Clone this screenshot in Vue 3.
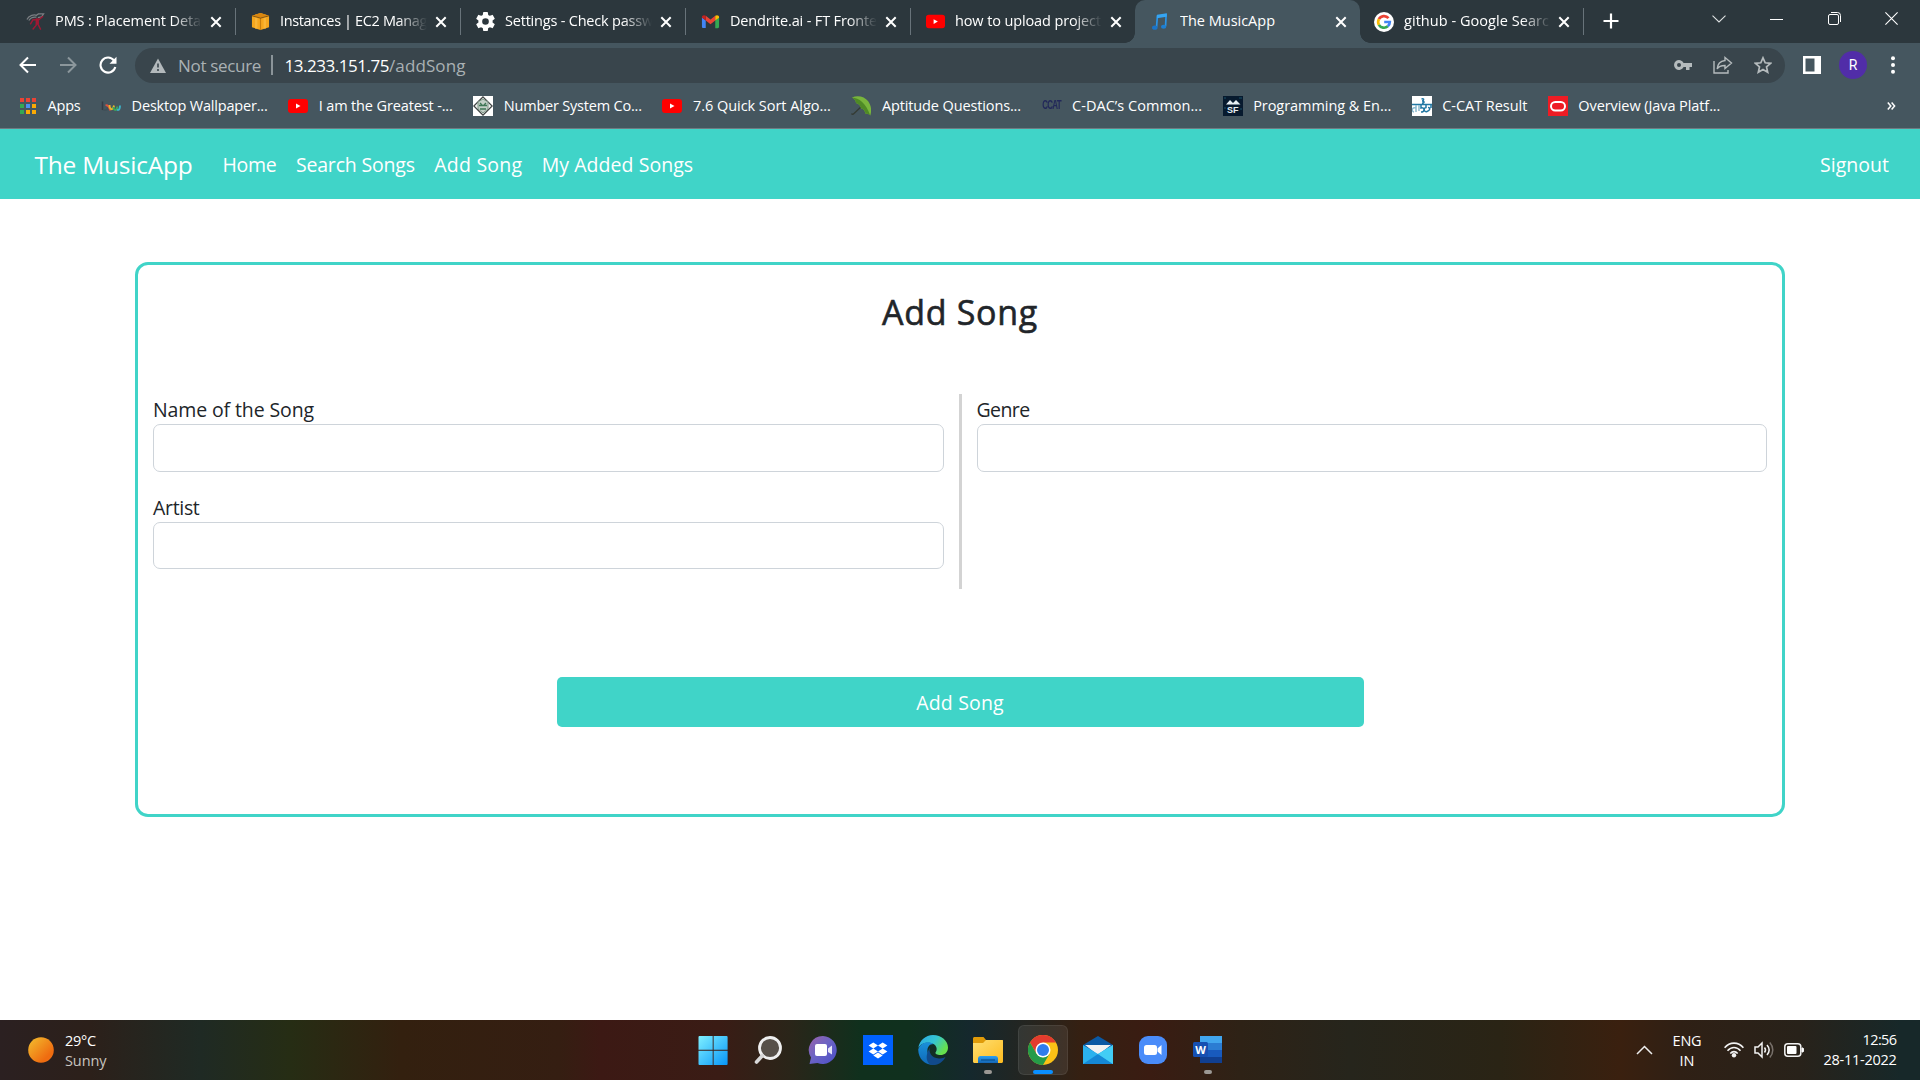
<script setup>
// Sets the tracking of a label so that it fills the given width.
const vFit = {
  mounted(el, { value }) {
    el.style.letterSpacing = '0px'
    const range = document.createRange()
    range.selectNodeContents(el)
    const natural = range.getBoundingClientRect().width
    el.style.letterSpacing = (value - natural) / el.textContent.length + 'px'
    el.style.width = value + 'px'
  },
}

const tabs = [
  { icon: 'pms', title: 'PMS : Placement Deta', w: 146 },
  { icon: 'aws', title: 'Instances | EC2 Manag', w: 147 },
  { icon: 'gear', title: 'Settings - Check passw', w: 148 },
  { icon: 'gmail', title: 'Dendrite.ai - FT Fronte', w: 147 },
  { icon: 'yt', title: 'how to upload project', w: 146 },
  { icon: 'music', title: 'The MusicApp', w: 95, active: true },
  { icon: 'google', title: 'github - Google Searc', w: 145 },
]

const bookmarks = [
  { icon: 'apps', title: 'Apps', w: 33 },
  { icon: 'bw', title: 'Desktop Wallpaper...', w: 136 },
  { icon: 'yt', title: 'I am the Greatest -...', w: 134 },
  { icon: 'geeks', title: 'Number System Co...', w: 138 },
  { icon: 'yt', title: '7.6 Quick Sort Algo...', w: 138 },
  { icon: 'umbrella', title: 'Aptitude Questions...', w: 139 },
  { badge: 'CCAT', title: 'C-DAC’s Common...', w: 130 },
  { icon: 'sf', badge: 'SF', title: 'Programming & En...', w: 138 },
  { icon: 'cdac', title: 'C-CAT Result', w: 85 },
  { icon: 'oracle', title: 'Overview (Java Platf...', w: 142 },
]

const links = [
  { title: 'Home', w: 54 },
  { title: 'Search Songs', w: 119 },
  { title: 'Add Song', w: 88 },
  { title: 'My Added Songs', w: 151.5 },
]
</script>

<template>
  <div class="screen">
    <svg class="defs" width="0" height="0" aria-hidden="true">
      <defs>
        <linearGradient id="gSun" x1="0" y1="0" x2="1" y2="1"><stop offset="0" stop-color="#f3c02f" /><stop offset=".75" stop-color="#ef6c10" /></linearGradient>
        <linearGradient id="gWin" x1="0" y1="0" x2="1" y2="1"><stop offset="0" stop-color="#7ff0ff" /><stop offset="1" stop-color="#0795f8" /></linearGradient>
        <linearGradient id="gChat" x1="0" y1="0" x2="1" y2="1"><stop offset="0" stop-color="#9b62a8" /><stop offset=".45" stop-color="#6c63c4" /><stop offset="1" stop-color="#4a4fc8" /></linearGradient>
        <linearGradient id="gEdge" x1="0" y1="0" x2="1" y2=".5"><stop offset="0" stop-color="#2aa6e8" /><stop offset=".55" stop-color="#35c5d2" /><stop offset="1" stop-color="#66e04d" /></linearGradient>
        <linearGradient id="gEdge2" x1="0" y1="0" x2="0" y2="1"><stop offset="0" stop-color="#1a90da" /><stop offset="1" stop-color="#0f68b8" /></linearGradient>
        <linearGradient id="gFold" x1="0" y1="0" x2="1" y2="1"><stop offset="0" stop-color="#ffdf72" /><stop offset="1" stop-color="#fdbb1f" /></linearGradient>
        <linearGradient id="gNote" x1="0" y1="0" x2="0" y2="1"><stop offset="0" stop-color="#29a0f4" /><stop offset="1" stop-color="#1465b4" /></linearGradient>
      </defs>
      <symbol id="pms" viewBox="0 0 20 20">
        <path d="M1 8C3 3 9 2.500 11 3.500L13 2h5.500l-2 3-4 1M3 9C5 5.500 8 5 11 5.500" fill="none" stroke="#7b7f83" stroke-width="1.300" />
        <path d="M18 4.500 12.500 9 12.700 13l2.800 5.500M12.500 8.500l-5-.500-3 5M11.500 13 7 18.500" fill="none" stroke="#a01833" stroke-width="1.500" />
        <path d="M10.200 6.500h3.300v6L10 14z" fill="#a01833" />
      </symbol>
      <symbol id="aws" viewBox="0 0 20 20">
        <path d="m1 4 9-3 9 3v12l-9 3-9-3z" fill="#f5a61d" /><path d="m1 4 9-3 9 3-9 2.500z" fill="#d9860f" /><path d="M5.500 5.800v11.500M14.500 5.800v11.500" stroke="#f9b537" stroke-width="2.500" /><path d="M10 6.500V19" stroke="#c67d0e" stroke-width="1.200" /><path d="M1 4l9 2.500L19 4" fill="none" stroke="#503512" stroke-width=".7" />
      </symbol>
      <symbol id="gear" viewBox="2 2 20 20">
        <path fill="#fff" d="M19.430 12.980c.04-.32.070-.64.070-.98s-.03-.66-.07-.98l2.110-1.650a.5.5 0 0 0 .12-.64l-2-3.460a.5.5 0 0 0-.61-.22l-2.490 1a7.300 7.300 0 0 0-1.690-.98l-.38-2.650A.49.49 0 0 0 14 2h-4a.49.49 0 0 0-.49.420l-.38 2.650c-.61.250-1.170.590-1.690.980l-2.490-1a.49.49 0 0 0-.61.220l-2 3.460a.49.49 0 0 0 .12.640l2.110 1.650a7.900 7.900 0 0 0 0 1.960l-2.110 1.650a.5.5 0 0 0-.12.640l2 3.460c.12.220.39.300.61.220l2.490-1c.52.400 1.080.730 1.690.980l.38 2.650c.03.240.24.420.49.420h4c.25 0 .46-.18.490-.42l.38-2.650c.61-.25 1.170-.59 1.690-.98l2.490 1c.23.090.49 0 .61-.22l2-3.460a.5.5 0 0 0-.12-.64zM12 15.500a3.500 3.500 0 1 1 0-7 3.500 3.500 0 0 1 0 7z" />
      </symbol>
      <symbol id="gmail" viewBox="0 0 20 20">
        <path fill="#4285f4" d="M1 5.500v10c0 .8.600 1.400 1.400 1.400H5V9z" /><path fill="#34a853" d="M15 17h2.600c.8 0 1.400-.6 1.400-1.400v-10L15 9z" /><path fill="#ea4335" d="M5 9V4l5 3.800L15 4v5l-5 3.800z" /><path fill="#c5221f" d="M1 5.200V6l4 3V4C3.300 2.700 1 3.600 1 5.200z" /><path fill="#fbbc04" d="M15 4v5l4-3v-.8C19 3.500 16.700 2.700 15 4z" />
      </symbol>
      <symbol id="yt" viewBox="0 0 20 20"><rect y="3" width="20" height="14" rx="3" fill="#f00" /><path d="M8 7.500v5l4.500-2.500z" fill="#fff" /></symbol>
      <symbol id="music" viewBox="0 0 20 20">
        <path d="M6.800 3.500 5.800 16M16 2l-.7 13" fill="none" stroke="#2a93e6" stroke-width="1.800" /><path d="M6.300 3 16.700 1.400 16.500 5 6.200 6.500z" fill="#35a5f3" /><ellipse cx="4" cy="16.500" rx="2.900" ry="2.200" fill="#1b74c8" /><ellipse cx="13.300" cy="15.500" rx="2.800" ry="2.200" fill="#1e7fd2" />
      </symbol>
      <symbol id="google" viewBox="0 0 20 20">
        <circle cx="10" cy="10" r="10" fill="#fff" />
        <g fill="none" stroke-width="2.700"><path d="M14.500 6.200A5.800 5.800 0 0 0 4.900 7.200" stroke="#ea4335" /><path d="M4.900 7.200a5.800 5.800 0 0 0 0 5.600" stroke="#fbbc05" /><path d="M4.900 12.800a5.800 5.800 0 0 0 8.900 1.500" stroke="#34a853" /><path d="M13.800 14.300A5.800 5.800 0 0 0 15.800 10H10.200" stroke="#4285f4" /></g>
      </symbol>
      <symbol id="apps" viewBox="0 0 20 20">
        <path fill="#ea4335" d="M2 2h4v4H2zM8 2h4v4H8zM14 2h4v4h-4z" /><path fill="#34a853" d="M2 8h4v4H2zM2 14h4v4H2z" /><path fill="#4a90f4" d="M8 8h4v4H8z" /><path fill="#fbaa05" d="M14 8h4v4h-4zM14 14h4v4h-4zM8 14h4v4H8z" />
      </symbol>
      <symbol id="bw" viewBox="0 0 20 20">
        <g fill="none" stroke-width="1.900"><path d="M1.500 5.500V14" stroke="#343b45" stroke-width="1.500" /><path d="M2 13.500c3 1.500 5 0 5-2.500" stroke="#3f4f58" /><path d="M4.500 9.500c3-1.500 4 3.500 5 5" stroke="#dd5140" /><path d="M8.500 9c0 5 3.500 6 4.500.500" stroke="#e8b52c" /><path d="M12.300 11c.5 4 3.500 4 4-.5" stroke="#3ba85a" /><path d="M16 13.500c2 1.500 3-1 3-4" stroke="#3bb4c9" /></g>
      </symbol>
      <symbol id="geeks" viewBox="0 0 20 20">
        <path fill="#fff" d="M0 0h20v20H0z" /><path d="m10 .8 9.200 9.200-9.200 9.200L.8 10z" fill="#eef1ee" stroke="#3d4140" stroke-width="1.200" /><path d="m5 6 5-3 5 3v7l-5 4-5-4z" fill="#c3cfc7" stroke="#7a9484" stroke-width="1" /><path d="M6 9.500h8M7 13h6M7 7l2 2M13 7l-2 2" stroke="#3f7756" stroke-width="1.300" />
      </symbol>
      <symbol id="umbrella" viewBox="0 0 20 20">
        <path d="M12 9 3 17.500c-1 1-2 1-2.500 0" fill="none" stroke="#343b33" stroke-width="1.300" /><path d="M1 1.500C7-1.500 14 1 17 5c3 4 4 9 2.300 14.500C18 17.800 16 17.500 14.800 18 14 15 12.500 13 10 12.200 9.500 9.500 7.500 7.500 5 7 5 5 3.500 3 1 1.500z" fill="#78b53c" /><path d="M1 1.500C8 2 15 7 19.300 19.500 18 17.800 16 17.500 14.800 18 14 15 12.500 13 10 12.200 9.500 9.500 7.500 7.500 5 7 5 5 3.500 3 1 1.500z" fill="#4f8a26" />
      </symbol>
      <symbol id="sf" viewBox="0 0 20 20"><path fill="#071a2e" d="M0 0h20v20H0z" /><path d="M3 8.500 7 4l3 3 3-3 4.500 4.500z" fill="#e8f0f4" /><path d="M1 2h2M16 2h3M1 12h2M17 13h2" stroke="#185069" /></symbol>
      <symbol id="cdac" viewBox="0 0 20 20">
        <path fill="#fff" d="M0 0h20v20H0z" /><g fill="none" stroke="#2278a4" stroke-width="1.500"><path d="M9.500 3c3.500-1 2 2 .5 2 3 0 2.500 2.500 0 2M0 8.500h20M9 9v3c4-1 4 4 0 4M14 9v2.500c-3 .5-2 5 1 4 3-1 4-4 1-4M19 9v3" /><path d="M4 9v7M4 12c-4-1-5 3-2 4M7 9v6" stroke="#8bbbd0" /></g>
      </symbol>
      <symbol id="oracle" viewBox="0 0 20 20"><path fill="#ee1c24" d="M0 0h20v20H0z" /><rect x="3" y="6" width="14" height="8.500" rx="4.250" fill="none" stroke="#fff" stroke-width="2" /></symbol>
      <symbol id="cross" viewBox="0 0 12 12"><path d="m1.300 1.300 9.400 9.400M10.700 1.300 1.300 10.700" stroke="#fff" stroke-width="2" /></symbol>
    </svg>

    <header class="browser">
      <div class="tabstrip">
        <div v-for="t in tabs" :key="t.title" class="tab" :class="{ active: t.active }">
          <svg class="favicon"><use :href="'#' + t.icon" /></svg>
          <span class="tab-title" :class="{ faded: !t.active }"><span v-fit="t.w" class="fit">{{ t.title }}</span></span>
          <svg class="tab-close"><use href="#cross" /></svg>
        </div>
        <svg class="new-tab" viewBox="0 0 16 16"><path d="M8 .5v15M.5 8h15" stroke="#fff" stroke-width="2.200" /></svg>
        <div class="window-controls">
          <svg width="14" height="8" viewBox="0 0 14 8"><path d="m.5.700 6.500 6.300L13.500.7" fill="none" stroke="#dfe2e3" stroke-width="1.100" /></svg>
          <svg width="13" height="14" viewBox="0 0 13 14"><path d="M0 7.500h13" stroke="#fff" /></svg>
          <svg width="13" height="13" viewBox="0 0 13 13"><g fill="none" stroke="#fff"><rect x=".5" y="2.500" width="10" height="10" rx="1.500" /><path d="M3 .5h6.500a3 3 0 0 1 3 3V10" /></g></svg>
          <svg width="13" height="13" viewBox="0 0 13 13"><path d="m.4.400 12.200 12.200M12.600.4.400 12.600" stroke="#fff" stroke-width="1.100" /></svg>
        </div>
      </div>

      <div class="toolbar">
        <svg class="nav-ico" viewBox="0 0 18 18"><path d="M17 9H2M9 1.500 1.500 9 9 16.500" fill="none" stroke="#fff" stroke-width="2" /></svg>
        <svg class="nav-ico" viewBox="0 0 18 18"><path d="M1 9h15M9 1.500 16.500 9 9 16.500" fill="none" stroke="#8c979c" stroke-width="2" /></svg>
        <svg class="nav-ico" viewBox="0 0 18 18"><path d="M15 4.500A7.500 7.500 0 1 0 16.300 11" fill="none" stroke="#fff" stroke-width="2.100" /><path d="M17.500.8v7h-7z" fill="#fff" /></svg>
        <div class="omnibox">
          <svg class="warn" viewBox="0 0 16 15"><path d="M8 .5 16 15H0z" fill="#b3b9bc" /><path d="M8 5.500v4M8 11v2" stroke="#39454c" stroke-width="1.600" /></svg>
          <span v-fit="83" class="fit secure">Not secure</span>
          <i class="bar"></i>
          <span v-fit="104.500" class="fit host">13.233.151.75</span><span v-fit="76.500" class="fit path">/addSong</span>
          <div class="omni-icons">
            <svg width="18" height="12" viewBox="0 0 18 12"><path d="M9.600 4A5 5 0 1 0 9.600 8H12v3h3.500V8H18V4zM5 8a2 2 0 1 1 0-4 2 2 0 0 1 0 4z" fill="#b5bbbd" /></svg>
            <svg width="20" height="18" viewBox="0 0 20 18"><g fill="none" stroke="#b5bbbd" stroke-width="1.400"><path d="M1 5v12h14v-3" /><path d="M12 1.500 18.500 7 12 12.500V9.500c-4 0-6.500 1-7.800 3.500.3-4.500 3-8 7.800-8.500z" /></g></svg>
            <svg width="18" height="18" viewBox="0 0 18 18"><path d="m9 1.800 2.200 5 5.400.5-4.100 3.600 1.200 5.300L9 13.400l-4.700 2.800 1.200-5.300-4.100-3.600 5.400-.5z" fill="none" stroke="#b5bbbd" stroke-width="1.700" /></svg>
          </div>
        </div>
        <svg class="panel" viewBox="0 0 18 18"><path fill="#fff" fill-rule="evenodd" d="M0 0h18v18H0zM2.500 2.500v13h9v-13z" /></svg>
        <span class="avatar">R</span>
        <svg class="dots" viewBox="0 0 4 18"><circle cx="2" cy="2.200" r="2" fill="#fff" /><circle cx="2" cy="9" r="2" fill="#fff" /><circle cx="2" cy="15.800" r="2" fill="#fff" /></svg>
      </div>

      <div class="bookmarks">
        <div v-for="b in bookmarks" :key="b.title" class="bookmark">
          <span class="bm-ico">
            <svg v-if="b.icon" width="20" height="20"><use :href="'#' + b.icon" /></svg>
            <span v-if="b.badge" class="badge" :class="b.badge.toLowerCase()">{{ b.badge }}</span>
          </span>
          <span v-fit="b.w" class="fit">{{ b.title }}</span>
        </div>
        <svg class="more" viewBox="0 0 9 8"><path d="m.8.600 3 3.400-3 3.400M4.600.6l3 3.400-3 3.400" fill="none" stroke="#fff" stroke-width="1.500" /></svg>
      </div>
    </header>

    <nav class="navbar">
      <a v-fit="158" class="fit brand">The MusicApp</a>
      <a v-for="l in links" :key="l.title" v-fit="l.w" class="fit link">{{ l.title }}</a>
      <a v-fit="69" class="fit signout">Signout</a>
    </nav>

    <main class="page">
      <section class="card">
        <h2 class="heading"><span v-fit="156" class="fit">Add Song</span></h2>
        <div class="columns">
          <div class="col">
            <label class="field"><span v-fit="161" class="fit">Name of the Song</span><input type="text" /></label>
            <label class="field second"><span v-fit="46.500" class="fit">Artist</span><input type="text" /></label>
          </div>
          <i class="divider"></i>
          <div class="col">
            <label class="field"><span v-fit="53" class="fit">Genre</span><input type="text" /></label>
          </div>
        </div>
        <button class="submit"><span v-fit="87.500" class="fit">Add Song</span></button>
      </section>
    </main>

    <footer class="taskbar">
      <div class="weather">
        <svg width="26" height="26" viewBox="0 0 26 26"><circle cx="13" cy="13" r="12.800" fill="url(#gSun)" /></svg>
        <div class="weather-text"><span v-fit="31" class="fit">29°C</span><span v-fit="41.500" class="fit dim">Sunny</span></div>
      </div>

      <div class="apps">
        <div class="slot"><svg width="30" height="30" viewBox="0 0 30 30"><path fill="url(#gWin)" d="M1.500 1h13.200v13.700H.5V2a1 1 0 0 1 1-1zM15.600 1h13a1 1 0 0 1 1 1v12.700h-14zM.5 15.700h14.200V30H1.500a1 1 0 0 1-1-1zM15.600 15.700h14V29a1 1 0 0 1-1 1h-13z" /></svg></div>
        <div class="slot"><svg width="30" height="30" viewBox="0 0 30 30"><circle cx="17" cy="13" r="10.500" fill="#575049" stroke="#efefef" stroke-width="2.800" /><path d="M9.500 20.500 3.500 27" stroke="#d8d8d8" stroke-width="3.600" stroke-linecap="round" /></svg></div>
        <div class="slot"><svg width="30" height="30" viewBox="0 0 30 30"><path d="M15 1a14 14 0 1 1-5.500 27L1.500 29 3 22.500A14 14 0 0 1 15 1z" fill="url(#gChat)" /><rect x="7" y="9" width="12" height="12" rx="2" fill="#fff" /><path d="M20 13.500 24 10.500v9L20 17z" fill="#e6e6f8" /></svg></div>
        <div class="slot"><svg width="30" height="30" viewBox="0 0 30 30"><path fill="#0061fe" d="M0 0h30v30H0z" /><path fill="#fff" d="m10.300 7.400 4.700 3-4.700 3-4.700-3zM19.700 7.400l4.700 3-4.700 3-4.700-3zM10.300 13.400l4.700 3-4.700 3-4.700-3zM19.700 13.400l4.700 3-4.700 3-4.700-3zM15 17.400l4.700 3-4.700 3-4.700-3z" /></svg></div>
        <div class="slot"><svg width="30" height="30" viewBox="0 0 30 30"><path d="M.3 13C1.500 5.500 7.500 0 15 0c8.500 0 15 6 15 12.500 0 5-3.500 7.500-7.500 7.500-3.500 0-5.500-1.200-5-2.500 2-2.500 1.500-6.500-2-8.500C10.500 6.500 3 7.500.3 13z" fill="url(#gEdge)" /><path d="M.2 14.500C2.500 7 11 5.500 15.500 9c-4.500 0-6.500 3.500-6 8 .6 5.500 5 9.500 9.500 12-8.500 3-18.500-2.500-18.800-14.500z" fill="url(#gEdge2)" /><path d="M12 12.500C10.500 17 13 23 21 23.500c3 .2 5-1 6.500-1.500-2.500 4.500-6.500 8-12.500 8-6 0-9-8.500-3-17.500z" fill="#114a8b" /></svg></div>
        <div class="slot"><svg width="30" height="30" viewBox="0 0 30 30"><path d="M0 3.500C0 2.500.8 2 1.500 2h9L13 5h16c.6 0 1 .5 1 1v4H0z" fill="#e09b09" /><path d="M0 8h10l3-3h16c.6 0 1 .5 1 1v20.500c0 .8-.7 1.500-1.500 1.500h-27C.7 28 0 27.300 0 26.500z" fill="url(#gFold)" /><path d="M5 28v-5a2.500 2.500 0 0 1 2.500-2h15a2.500 2.500 0 0 1 2.500 2v5z" fill="url(#gNote)" /><path d="M8 25h14" stroke="#0a508f" stroke-width="1.200" /></svg><i class="run"></i></div>
        <div class="slot current"><svg width="30" height="30" viewBox="0 0 30 30"><circle cx="15" cy="15" r="15" fill="#fbc116" /><path d="M2 7.500A15 15 0 0 1 28 7.500H15L8.500 18.800z" fill="#e33b2e" /><path d="M2 7.500 8.500 18.800l6.500 3.700 6.500-3.700L15 30A15 15 0 0 1 2 7.500z" fill="#259b48" /><circle cx="15" cy="15" r="7.500" fill="#fff" /><circle cx="15" cy="15" r="6" fill="#2f7ced" /></svg><i class="run wide"></i></div>
        <div class="slot"><svg width="30" height="30" viewBox="0 0 30 30"><path d="M0 10 15 1l15 9-5 8H5z" fill="#0a59a4" /><path d="M2 10h26L15 20z" fill="#f2f2f2" /><path d="M0 10v18.900h30V10L15 19z" fill="#2bb2ee" /><path d="m0 28.900 30 0L15 19z" fill="#1588d6" /><path d="m30 10-15 9 15 9.900z" fill="#42cdf5" /></svg></div>
        <div class="slot"><svg width="30" height="30" viewBox="0 0 30 30"><rect x="1" y="1" width="28" height="28" rx="9" fill="#4a8cf9" /><rect x="6" y="10" width="13" height="10" rx="2.500" fill="#fff" /><path d="m19.500 13.500 4-3.500v10l-4-3.500z" fill="#fff" /></svg></div>
        <div class="slot"><svg width="30" height="30" viewBox="0 0 30 30"><path fill="#41a5ee" d="M7 1h22v7H7z" /><path fill="#2b7cd3" d="M7 8h22v7H7z" /><path fill="#185abd" d="M7 15h22v7H7z" /><path fill="#103f91" d="M7 22h22v6H7z" /><rect x="0" y="7" width="15" height="15" rx="1.500" fill="#1650b2" /><text x="7.500" y="18.500" text-anchor="middle" font-family="Open Sans, sans-serif" font-weight="700" font-size="11" fill="#fff">W</text></svg><i class="run"></i></div>
      </div>

      <div class="tray">
        <svg width="17" height="10" viewBox="0 0 17 10"><path d="m1 9 7.500-7.500L16 9" fill="none" stroke="#eee" stroke-width="1.500" /></svg>
        <div class="lang"><span v-fit="29" class="fit">ENG</span><span v-fit="15" class="fit">IN</span></div>
        <svg class="wifi" width="20" height="16" viewBox="0 0 20 16"><g fill="none" stroke="#f2f2f2" stroke-width="1.600"><path d="M.6 5.800c5.200-6.200 13.600-6.200 18.800 0M3.500 8.800c3.700-4.400 9.300-4.400 13 0M6.300 11.500c2.200-2.500 5.200-2.500 7.400 0" /></g><circle cx="10" cy="13.300" r="2.200" fill="#f2f2f2" /></svg>
        <svg class="vol" width="20" height="18" viewBox="0 0 20 18"><g fill="none" stroke="#f2f2f2" stroke-width="1.500"><path d="M1 6h3l4-4v14l-4-4H1z" /><path d="M10.500 6.500c1.200 1.500 1.200 3.500 0 5M13 4c2.600 3 2.600 7 0 10" /><path d="M15.800 1.500c4 4.500 4 10.500 0 15" stroke="#77706a" /></g></svg>
        <svg class="bat" width="20" height="14" viewBox="0 0 20 14"><rect x=".8" y=".8" width="16" height="12.400" rx="3" fill="none" stroke="#f2f2f2" stroke-width="1.500" /><rect x="3" y="3" width="9.500" height="8" rx="1" fill="#fff" /><path d="M18 5v4h1c1-1 1-3 0-4z" fill="#fff" stroke="#fff" /></svg>
        <div class="clock"><span v-fit="34" class="fit">12:56</span><span v-fit="73" class="fit">28-11-2022</span></div>
      </div>
    </footer>
  </div>
</template>

<style>
body { margin: 0; overflow: hidden; background: #fff; }
</style>

<style scoped>
* { box-sizing: border-box; }
.screen { width: 1920px; height: 1080px; display: flex; flex-direction: column; font-family: "Open Sans", "Noto Sans", sans-serif; color: #212529; background: #fff; overflow: hidden; }
.defs { position: absolute; }
svg { display: block; flex: none; }
.fit { display: inline-block; white-space: pre; flex: none; font-kerning: none; }

.browser { height: 129px; flex: none; background: #45565f; color: #fff; border-bottom: 1px solid #6e7b82; }
.tabstrip { height: 43px; display: flex; background: #2c373d; padding-left: 11px; }
.tab { width: 225px; height: 43px; padding: 0 13px 0 15px; display: flex; align-items: center; border-right: 1px solid #68737a; border-image: linear-gradient(transparent 9px, #68737a 9px, #68737a 34px, transparent 34px) 1; flex: none; position: relative; }
.tab:nth-child(5) { border-image: none; border-color: transparent; }
.tab.active { background: #45565f; border: 0; border-radius: 10px 10px 0 0; margin-left: -1px; padding: 0 13px 0 16px; }
.tab.active::before, .tab.active::after { content: ""; position: absolute; bottom: 0; width: 10px; height: 10px; }
.tab.active::before { left: -10px; background: radial-gradient(circle at 0 0, transparent 9.500px, #45565f 10px); }
.tab.active::after { right: -10px; background: radial-gradient(circle at 100% 0, transparent 9.500px, #45565f 10px); }
.tab:nth-child(7) { padding-left: 14px; width: 224px; }
.favicon { width: 19px; height: 19px; }
.tab:nth-child(7) .favicon { width: 20px; height: 20px; }
.tab-title { margin-left: 10px; width: 147px; overflow: hidden; font-size: 14.500px; line-height: 24px; margin-top: -2px; white-space: nowrap; flex: none; }
.tab-title.faded { -webkit-mask-image: linear-gradient(90deg, #000 118px, transparent 147px); mask-image: linear-gradient(90deg, #000 118px, transparent 147px); }
.tab-close { width: 12px; height: 12px; margin-left: 8px; }
.tab:nth-child(7) .tab-close { margin-left: 7px; }
.new-tab { width: 16px; height: 16px; margin: 13px 0 0 19px; }
.window-controls { margin-left: auto; padding-right: 22px; width: 208px; height: 37px; display: flex; align-items: center; justify-content: space-between; }

.toolbar { height: 44px; display: flex; align-items: center; padding-left: 19px; }
.nav-ico { width: 18px; height: 18px; margin-right: 22px; }
.omnibox { width: 1650px; height: 35px; border-radius: 18px; margin-left: -4px; background: #39454c; display: flex; align-items: center; padding-left: 15px; font-size: 17px; line-height: 30px; }
.omnibox .fit { margin-top: 1px; }
.warn { width: 16px; height: 15px; }
.secure { margin-left: 12px; color: #aab1b4; }
.bar { width: 2px; height: 20px; background: #8b9499; margin: 0 11.500px 0 10px; }
.path { color: #aab1b4; }
.omni-icons { margin-left: auto; display: flex; align-items: center; gap: 21px; padding-right: 13.500px; }
.panel { width: 18px; height: 18px; margin-left: 18px; }
.avatar { width: 28px; height: 28px; margin-left: 18px; border-radius: 50%; background: #512da8; font: 14px/28px Roboto, sans-serif; text-align: center; }
.dots { width: 4px; height: 18px; margin-left: 24px; }

.bookmarks { height: 38px; display: flex; align-items: center; padding-left: 18px; font-size: 14.500px; line-height: 24px; }
.bookmark { display: flex; align-items: center; gap: 10.500px; margin-right: 20.600px; }
.bookmark:first-child .bm-ico { margin-right: -1px; }
.bm-ico { width: 20px; height: 20px; position: relative; }
.badge { position: absolute; left: 0; width: 20px; text-align: center; font: 700 8px/10px "Liberation Sans", sans-serif; color: #e8f0f4; }
.badge.sf { top: 9px; font-size: 9px; }
.badge.ccat { top: 5px; color: #22285a; letter-spacing: -.8px; transform: scaleY(1.700); }
.more { width: 9px; height: 8px; margin-left: auto; margin-right: 24px; }

.navbar { height: 70px; flex: none; background: #40d4c8; color: #fff; display: flex; align-items: center; padding: 0 31px 0 34.500px; font-size: 19.500px; line-height: 30px; }
.navbar .fit { margin-top: 2px; }
.brand { font-size: 24.500px; margin-right: 30px; }
.link { margin-right: 19.400px; }
.signout { margin-left: auto; }

.page { flex: 1; display: flex; flex-direction: column; align-items: center; padding-top: 63px; }
.card { width: 1650px; height: 555px; border: 3px solid #40d4c8; border-radius: 13px; display: flex; flex-direction: column; align-items: center; }
.heading { margin: 23px 0 0; font-size: 34px; line-height: 48px; font-weight: 500; height: 106px; -webkit-text-stroke: .6px #212529; }
.columns { display: flex; width: 100%; height: 195px; }
.col { flex: 1; padding: 0 15px; display: flex; flex-direction: column; gap: 20px; }
.divider { width: 3px; background: lightgray; }
.field { display: flex; flex-direction: column; height: 78px; font-size: 19.500px; line-height: 32px; }
.field .fit { height: 30px; }
.field input { width: 100%; height: 48px; border: 1px solid #ced4da; border-radius: 7px; background: #fff; outline: none; }
.second input { height: 47px; }
.submit { margin: 88px 0 0 1px; width: 807px; height: 50px; border: 0; border-radius: 5px; background: #40d4c8; color: #fff; font: 19.500px/30px "Open Sans", "Noto Sans", sans-serif; }
.submit .fit { margin: 2px 1px 0 0; }

.taskbar { height: 60px; flex: none; display: grid; grid-template-columns: 685px 550px 1fr; color: #fff; font-size: 14.500px; line-height: 20px;
  background: linear-gradient(90deg, #2b2021 0, #2c201a 90px, #1f2a24 200px, #262d14 290px, #33200f 400px, #351e12 560px, #3c1914 600px, #3a1c15 720px, #2a2519 790px, #10301d 860px, #10301e 910px, #15282d 970px, #252520 1030px, #352012 1080px, #3a1c12 1150px, #2e2216 1240px, #26251c 1350px, #2a2415 1500px, #3a200f 1620px, #2f2015 1680px, #28221a 1800px, #172829 1900px); }
.weather { display: flex; align-items: center; padding-left: 28px; gap: 11px; }
.weather-text, .lang, .clock { display: flex; flex-direction: column; }
.weather-text { margin-top: 1px; }
.dim { color: #c9c5c0; }
.apps { display: flex; align-items: center; gap: 5px; padding-left: 3px; }
.slot { width: 50px; height: 50px; flex: none; display: flex; align-items: center; justify-content: center; border-radius: 6px; position: relative; }
.slot:first-child svg { margin-right: 1px; }
.current { background: rgba(255, 255, 255, .08); box-shadow: inset 0 0 0 1px rgba(255, 255, 255, .07); }
.run { position: absolute; bottom: 1px; left: 21px; width: 8px; height: 4px; border-radius: 2px; background: #9b9894; }
.run.wide { left: 15px; width: 20px; background: #0a8fff; }
.tray { display: flex; align-items: center; justify-content: flex-end; padding-right: 23.500px; }
.lang { align-items: center; margin: 1px 22px 0 20px; }
.wifi { margin-right: 10px; margin-top: -1px; }
.vol { margin-right: 10px; }
.clock { align-items: flex-end; margin-left: 20px; margin-top: -1px; }
</style>
